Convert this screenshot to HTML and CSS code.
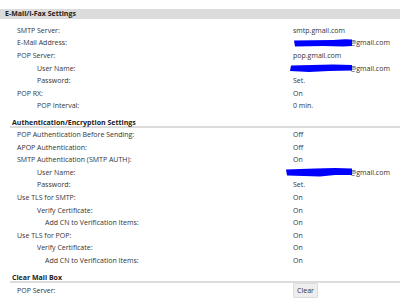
FILE: index.html
```html
<!DOCTYPE html>
<html lang="en">
<head>
  <meta charset="UTF-8">
  <title>E-Mail/I-Fax Settings</title>
  <link rel="stylesheet" href="styles.css">
</head>
<body>
  <!-- E-Mail / I-Fax -->
  <div class="group first">E-Mail/I-Fax Settings</div>
  <div class="row"><span class="label">SMTP Server:</span><span class="value">smtp.gmail.com</span></div>
  <div class="row"><span class="label">E-Mail Address:</span><span class="value"><svg class="scribble" width="60" height="8" viewBox="0 0 60 8"><path d="M1 1.5 L40 1 L52 0.2 L59 0.5 L59 7 L50 7.5 L30 7 L2 7.5 Z" fill="#0000ff"/></svg>@gmail.com</span></div>
  <div class="row"><span class="label">POP Server:</span><span class="value">pop.gmail.com</span></div>
  <div class="row"><span class="label sub">User Name:</span><span class="value"><svg class="scribble wide" width="64" height="8" viewBox="0 0 64 8"><path d="M2 1.5 L44 0.5 L63 1 L63 6.5 L40 7 L20 8 L1 7 Z" fill="#0000ff"/></svg>@gmail.com</span></div>
  <div class="row"><span class="label sub">Password:</span><span class="value">Set.</span></div>
  <div class="row"><span class="label">POP RX:</span><span class="value">On</span></div>
  <div class="row"><span class="label sub">POP Interval:</span><span class="value">0 min.</span></div>

  <!-- Authentication -->
  <div class="group">Authentication/Encryption Settings</div>
  <div class="row"><span class="label">POP Authentication Before Sending:</span><span class="value">Off</span></div>
  <div class="row"><span class="label">APOP Authentication:</span><span class="value">Off</span></div>
  <div class="row"><span class="label">SMTP Authentication (SMTP AUTH):</span><span class="value">On</span></div>
  <div class="row"><span class="label sub">User Name:</span><span class="value"><svg class="scribble widest" width="68" height="10" viewBox="0 0 68 10"><path d="M1 2.5 L30 1.5 L50 1 L67 1.5 L67 8 L50 8 L35 9.5 L2 8.5 Z" fill="#0000ff"/></svg>@gmail.com</span></div>
  <div class="row"><span class="label sub">Password:</span><span class="value">Set.</span></div>
  <div class="row"><span class="label">Use TLS for SMTP:</span><span class="value">On</span></div>
  <div class="row"><span class="label sub">Verify Certificate:</span><span class="value">On</span></div>
  <div class="row"><span class="label subsub">Add CN to Verification Items:</span><span class="value">On</span></div>
  <div class="row"><span class="label">Use TLS for POP:</span><span class="value">On</span></div>
  <div class="row"><span class="label sub">Verify Certificate:</span><span class="value">On</span></div>
  <div class="row"><span class="label subsub">Add CN to Verification Items:</span><span class="value">On</span></div>

  <!-- Mail box -->
  <div class="group">Clear Mail Box</div>
  <div class="row tall"><span class="label">POP Server:</span><span class="value"><button class="btn" type="button">Clear</button></span></div>
</body>
</html>
```

FILE: styles.css
```css
/* Estilos generales */
body {
  margin: 0;
  font-family: "Open Sans", "Noto Sans", sans-serif;
  font-size: 7px;
  color: #333;
  background: #fff;
}
.group {
  margin: 7px 0 0 10px;
  padding-left: 2px;
  line-height: 7px;
  font-weight: bold;
  color: #222;
  border-bottom: 2px solid #dcdcdc;
}
.group.first {
  margin: 9px 0 0 0;
  padding-left: 5px;
  line-height: 10px;
  background-color: #dcdcdc;
  border-bottom: none;
}
.group.first + .row {
  margin-top: 5px;
}
.row {
  display: grid;
  grid-template-columns: 293px 1fr;
  align-items: center;
  height: 12.6px;
}
.row.tall {
  height: 15px;
}
.label {
  padding-left: 17px;
}
.label.sub {
  padding-left: 37px;
}
.label.subsub {
  padding-left: 45px;
}
.value {
  display: flex;
  align-items: center;
}
.scribble {
  margin-right: -3px;
  position: relative;
}
.scribble.wide {
  margin-left: -4px;
}
.scribble.widest {
  margin-left: -8px;
}
.btn {
  font-family: inherit;
  font-size: 7px;
  color: #333;
  background-color: #eeeeee;
  border: 1px solid #dddddd;
  border-radius: 1px;
  width: 25px;
  height: 15px;
  padding: 0;
}
```
